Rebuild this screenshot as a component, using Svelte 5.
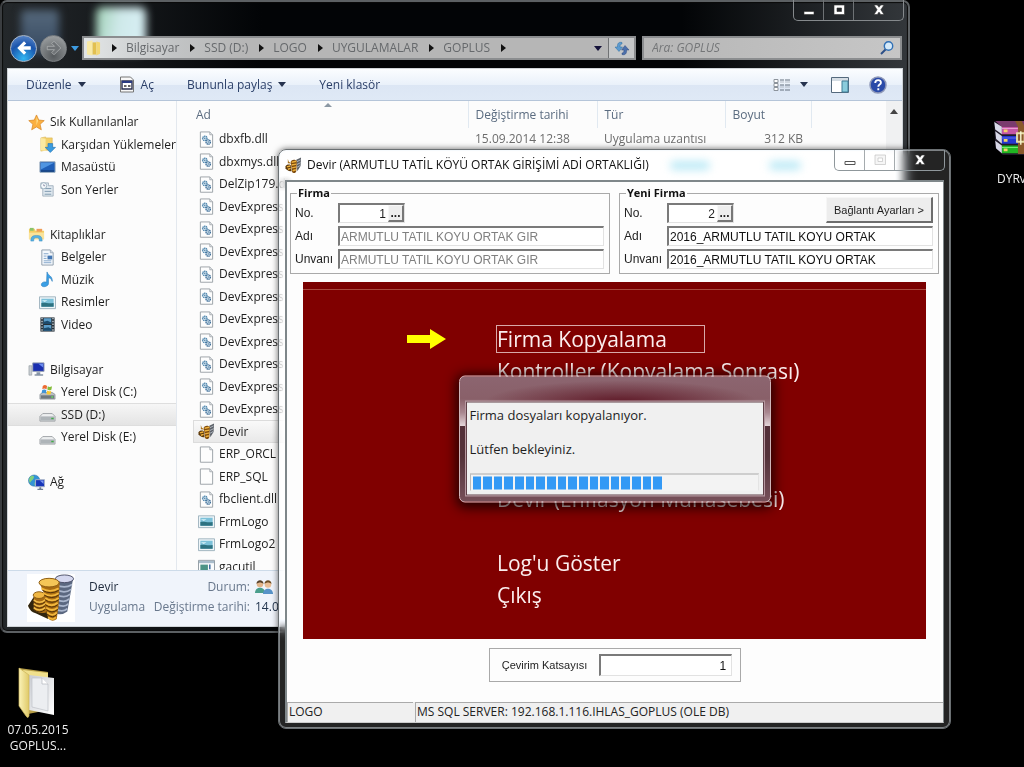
<script>
  const crumbs = ['Bilgisayar', 'SSD (D:)', 'LOGO', 'UYGULAMALAR', 'GOPLUS'];

  const places = [
    { icon: 'star', text: 'Sık Kullanılanlar', root: true },
    { icon: 'downloads', text: 'Karşıdan Yüklemeler' },
    { icon: 'desktop', text: 'Masaüstü' },
    { icon: 'recent', text: 'Son Yerler' },
    null,
    { icon: 'library', text: 'Kitaplıklar', root: true },
    { icon: 'document', text: 'Belgeler' },
    { icon: 'music', text: 'Müzik' },
    { icon: 'picture', text: 'Resimler' },
    { icon: 'video', text: 'Video' },
    null,
    { icon: 'computer', text: 'Bilgisayar', root: true },
    { icon: 'system', text: 'Yerel Disk (C:)' },
    { icon: 'disk', text: 'SSD (D:)', selected: true },
    { icon: 'disk', text: 'Yerel Disk (E:)' },
    null,
    { icon: 'network', text: 'Ağ', root: true }
  ];

  const files = [
    { icon: 'dll', name: 'dbxfb.dll', date: '15.09.2014 12:38', type: 'Uygulama uzantısı', size: '312 KB' },
    { icon: 'dll', name: 'dbxmys.dll' },
    { icon: 'dll', name: 'DelZip179.dll' },
    ...Array.from({ length: 10 }, () => ({ icon: 'dll', name: 'DevExpress' })),
    { icon: 'coins', name: 'Devir', selected: true },
    { icon: 'blank', name: 'ERP_ORCL' },
    { icon: 'blank', name: 'ERP_SQL' },
    { icon: 'dll', name: 'fbclient.dll' },
    { icon: 'picture', name: 'FrmLogo' },
    { icon: 'picture', name: 'FrmLogo2' },
    { icon: 'app', name: 'gacutil' }
  ];

  const groups = [
    { id: 'old', title: 'Firma', no: '1', name: 'ARMUTLU TATIL KOYU ORTAK GIR', locked: true },
    { id: 'new', title: 'Yeni Firma', no: '2', name: '2016_ARMUTLU TATIL KOYU ORTAK', connect: true }
  ];

  const steps = [
    'Firma Kopyalama',
    'Kontroller (Kopyalama Sonrası)',
    '', '', '',
    'Devir (Enflasyon Muhasebesi)',
    '',
    "Log'u Göster",
    'Çıkış'
  ];

  const blocks = Array.from({ length: 18 });
</script>

{#snippet icon(kind)}
  <svg class="icon" viewBox="0 0 18 18" aria-hidden="true">
    {#if kind === 'star'}
      <path d="M9 1l2.4 5.4 5.8.6-4.4 3.9 1.3 5.8L9 13.7l-5.1 3 1.3-5.8L.8 7l5.8-.6z" fill="#fbb040" stroke="#d98a2b" stroke-width=".8" />
      <path d="M9 3l1.6 4.2L9 12z" fill="#ffe08a" />
    {:else if kind === 'downloads'}
      <path d="M2 2l5-1v1h7v13H7l-5 1z" fill="#f3d06b" stroke="#d9b24a" stroke-width=".6" />
      <path d="M2 2l5 1v13l-5-1z" fill="#fbe9a2" />
      <path d="M9.500 8h5v4h3l-5.500 5.500L6.500 12h3z" fill="#3a9be0" stroke="#1e6fb2" stroke-width=".6" />
    {:else if kind === 'desktop'}
      <path d="M1 3h16v11H1z" fill="#1f5fb8" stroke="#8aa0b5" />
      <path d="M2 4h14L2 11z" fill="#4f95e2" />
      <path d="M2 12h14v1.500H2z" fill="#163f78" />
    {:else if kind === 'recent'}
      <path d="M2 2h8v3h5v11H4v-8H2z" fill="#dfe8ef" stroke="#93a5b3" stroke-width=".8" />
      <path d="M6 8h7M6 11h7M6 14h7" stroke="#7d98ad" />
      <circle cx="5" cy="5" r="3.200" fill="#f6fafc" stroke="#90a7b7" stroke-width=".8" />
      <path d="M5 3.500V5h1.500" stroke="#668" fill="none" stroke-width=".7" />
    {:else if kind === 'library'}
      <path d="M1 3h6l1 2h9v9H1z" fill="#f3cf63" />
      <path d="M2 2h4v3H2z" fill="#8bc36a" /><path d="M9 3h6v3H9z" fill="#ef9d57" />
      <path d="M1 7h16v7H1z" fill="#fae39a" />
      <path d="M3 16c0-5 2-6 6-6s6 1 6 6h-3c0-3-1-3.500-3-3.500S6 13 6 16z" fill="#54b0e2" stroke="#3389bd" stroke-width=".5" />
    {:else if kind === 'document'}
      <path d="M3 1h9l3 3v13H3z" fill="#f4f8fc" stroke="#8d9cab" />
      <path d="M12 1v3h3" fill="#cfd9e3" stroke="#8d9cab" stroke-width=".7" />
      <path d="M5 5h5M5 7.500h3M5 10h3M5 12.500h8M5 14.500h8" stroke="#84a6ca" />
      <path d="M9 7h5v4H9z" fill="#4376b3" />
    {:else if kind === 'music'}
      <path d="M8.500 1c1 4 6 4 5.500 10-1-3-2.500-3.500-4-4v6.500c0 3-7 4.500-7.500 1.300C2.200 12 6 10.800 8 12z" fill="#3ba0e6" stroke="#1f76ba" stroke-width=".6" />
    {:else if kind === 'picture'}
      <path d="M.5 3h17v12.500H.5z" fill="#eef5f8" stroke="#9db1bd" />
      <path d="M2.500 5h13v8.500h-13z" fill="#7cc1d9" />
      <path d="M2.500 9.500c4-1 7 1 13 0v4h-13z" fill="#2d7281" />
      <path d="M3 6.500h6l-3 2z" fill="#d6f0f8" />
    {:else if kind === 'video'}
      <path d="M1.500 1.500h15v15h-15z" fill="#26313a" />
      <path d="M5 2.500h8v6H5zM5 9.500h8v6H5z" fill="#5b9dc9" />
      <path d="M5 6l4-1 4 2v1.500H5zM5 13l5-1 3 1.500v2H5z" fill="#1c4b6d" />
      <path d="M3.200 2v14M14.800 2v14" stroke="#cdd6dc" stroke-width="1.400" stroke-dasharray="1.500 1.500" />
    {:else if kind === 'computer'}
      <path d="M1 5h3v10H1z" fill="#c8cdd2" stroke="#8b9198" stroke-width=".6" />
      <path d="M5 2h12v9H5z" fill="#1a2fb0" stroke="#9aa4b5" />
      <path d="M11 3h5v4z" fill="#6b8cf0" />
      <path d="M9 12h4v2h3v1.500H7V14h2z" fill="#8794a5" />
    {:else if kind === 'system'}
      <path d="M1 11l3-2h10l3 2v5H1z" fill="#b9bec2" stroke="#7d858a" stroke-width=".7" />
      <path d="M2 12h14v3.500H2z" fill="#6f787e" /><path d="M13 13h2v1.500h-2z" fill="#67e05e" />
      <path d="M4 2c2-1.500 3-1 4.500 0L8 5.500c-2-1-3-1-4.500 0z" fill="#ec6a32" />
      <path d="M9.300 2.500c1.700 1 3 .6 4.500-.2l-.7 3.700c-1.600.8-2.800.8-4.300-.1z" fill="#85bd3b" />
      <path d="M3.300 6.500c1.600-1 3-1 4.500 0L7.200 10c-1.600-.9-2.900-.9-4.500 0z" fill="#3f94d8" />
      <path d="M8.600 7c1.600.9 2.900.9 4.400.1l-.6 3.600c-1.500.8-2.900.7-4.400-.2z" fill="#f8c934" />
    {:else if kind === 'disk'}
      <path d="M1 11l3-3h10l3 3v5H1z" fill="#eceeef" stroke="#8b9195" stroke-width=".8" />
      <path d="M1.500 11h15v4.500h-15z" fill="#aeb4b8" /><path d="M13 12.500h2.500V14H13z" fill="#3fae45" />
    {:else if kind === 'network'}
      <circle cx="6.500" cy="7" r="6" fill="#3393d6" stroke="#23699c" stroke-width=".5" />
      <path d="M3 2.500c3-1.500 4 0 3 2s-2 2-4 5C.5 7 1 4 3 2.500zM7 9c2 0 2 2 0 3.500z" fill="#7fd07c" />
      <path d="M8 6h9.500v7.500H8z" fill="#1836b8" stroke="#aab6c8" />
      <path d="M12.500 7h4v3.500z" fill="#7e9af1" /><path d="M12 14h2v1.500h2V17h-6v-1.500h2z" fill="#708096" />
    {:else if kind === 'dll' || kind === 'blank'}
      <path d="M2.500 1h10l3 3v13.200h-13z" fill="#fdfdfd" stroke="#9aa0a6" />
      <path d="M12.500 1v3h3" fill="#e4e8eb" stroke="#9aa0a6" stroke-width=".8" />
      {#if kind === 'dll'}
        <circle cx="7.200" cy="7.800" r="2.300" fill="#dcebf5" stroke="#4f86ad" stroke-width="1.500" stroke-dasharray="1.300 .5" />
        <circle cx="10.800" cy="11.700" r="2.300" fill="#dcebf5" stroke="#3f6f99" stroke-width="1.500" stroke-dasharray="1.300 .5" />
        <circle cx="7.200" cy="7.800" r=".8" fill="#44759c" /><circle cx="10.800" cy="11.700" r=".8" fill="#44759c" />
      {/if}
    {:else if kind === 'app'}
      <path d="M.5 2.500h17v14H.5z" fill="#fafcfd" stroke="#8d979f" />
      <path d="M1 3h16v2.500H1z" fill="#a9bccb" /><path d="M2.500 7h8v8h-8z" fill="#4c9386" /><path d="M12.500 7v5" stroke="#35629b" stroke-width="1.500" />
    {:else if kind === 'coins'}
      <path d="M12 3l5-2.500-.5 9L13 15z" fill="#5c6168" />
      <path d="M12.500 5l4-2M12.500 8l4-2M12.500 11l3.500-2" stroke="#b4bac4" />
      <path d="M6 5c1-2.500 5-3 6.500-.5L12 15c-1 2.500-3.500 2.500-4.500 1z" fill="#7d4a0d" />
      <path d="M.5 10c1-2 3.500-2.500 5.500-1.500l1 6.500C4 15.500 2 14 .5 12z" fill="#5d390b" />
      <path d="M7 5.500l5-1M7 8.500l5-1M7.500 11.500l4.500-1M8 14.500l3.500-1M2 10.500l3.500-1M3 13l3-1" stroke="#eeb13c" stroke-width="1.500" />
      <path d="M3 2l1 3 3 2-4-.5z" fill="#a8701b" />
    {/if}
  </svg>
{/snippet}

{#snippet captions()}
  <div class="captions">
    <button aria-label="Simge durumuna küçült"><svg viewBox="0 0 16 14"><path class="glyph" d="M3 8.500h10v3H3z" /></svg></button>
    <button aria-label="Ekranı kapla"><svg viewBox="0 0 16 14"><path class="glyph" fill-rule="evenodd" d="M3 2h10.500v9.500H3zM6 5v3.500h4.500V5z" /></svg></button>
    <button class="close" aria-label="Kapat"><svg viewBox="0 0 16 14"><path class="glyph" d="M3 2h3.300L8 4.300 9.700 2H13L9.900 6.700 13 11.500H9.700L8 9.100l-1.700 2.400H3l3.100-4.800z" /></svg></button>
  </div>
{/snippet}

<main class="screen">
  <div class="shortcut folder">
    <svg viewBox="0 0 54 54" aria-hidden="true">
      <defs>
        <linearGradient id="fold" x1="0" x2="1"><stop offset="0" stop-color="#fbf3b8" /><stop offset="1" stop-color="#dfc968" /></linearGradient>
        <linearGradient id="sheet" x1="0" x2="1" y2="1"><stop offset="0" stop-color="#c9ccd2" /><stop offset="1" stop-color="#fff" /></linearGradient>
      </defs>
      <path d="M8 2l29 4v38l-20 4z" fill="#b79f48" />
      <path d="M12 4l25 3v35l-19-3z" fill="#f0e08c" />
      <path d="M18 9l25 3v37l-25-5z" fill="url(#sheet)" />
      <path d="M21 12h10l6 6v27l-16-4z" fill="#eceef1" stroke="#bfc2c7" stroke-width=".7" />
      <path d="M31 12v6h6" fill="#fff" stroke="#b3b6bb" stroke-width=".7" />
      <path d="M8 2l10 7v41q-1 3-3 0L8 40z" fill="url(#fold)" stroke="#cdb65a" stroke-width=".7" />
    </svg>
    <span>07.05.2015 GOPLUS...</span>
  </div>

  <div class="shortcut archive">
    <svg viewBox="0 0 48 38" aria-hidden="true">
      <path d="M0 1l8 5h40v31H9L1 29z" fill="#201a28" />
      <path d="M1 1h40l7 6H8z" fill="#7a3b6e" />
      <path d="M8 7h40v8H8z" fill="#c557a5" /><path d="M8 17h40v8H8z" fill="#2436cf" /><path d="M8 27h40v8H8z" fill="#20b522" />
      <path d="M0 2l8 5v8L1 10zM1 12l7 5v8l-6-5zM1 22l7 5v8l-6-5z" fill="#d8d9e8" />
      <path d="M8 9h40" stroke="#eba3d6" /><path d="M8 19h40" stroke="#6878f0" /><path d="M8 29h40" stroke="#7df07a" />
      <path d="M10 10h4v3h-4zM10 20h4v3h-4zM10 30h4v3h-4z" fill="#f3d269" />
      <path d="M22 1h7l3 6v29h-7V7z" fill="#8a5a2c" /><path d="M24 14h8v9h-8z" fill="none" stroke="#e7dfa6" stroke-width="2" /><path d="M28 12v14" stroke="#f6f3d0" stroke-width="1.500" />
    </svg>
    <span>DYRv</span>
  </div>

  <section class="explorer" aria-label="GOPLUS">
    <i class="haze bin"></i>
    <i class="haze sheet"></i>
    {@render captions()}

    <header class="address">
      <button class="nav back" aria-label="Geri"><svg viewBox="0 0 16 16"><path d="M2 8l6-6 2 2-2.500 2.500H14v3H7.500L10 12l-2 2z" fill="#fff" /></svg></button>
      <button class="nav next" aria-label="İleri"><svg viewBox="0 0 16 16"><path d="M14 8L8 2 6 4l2.500 2.500H2v3h6.500L6 12l2 2z" fill="#6f7376" stroke="#b9bcbe" stroke-width=".6" /></svg></button>
      <button class="drop" aria-label="Son sayfalar"><svg viewBox="0 0 8 5"><path d="M0 0h8L4 5z" fill="#3d9be0" /></svg></button>
      <nav class="path" aria-label="Konum">
        <svg class="mini" viewBox="0 0 16 18" aria-hidden="true"><path d="M1 2l6-1v16l-6-1z" fill="#f9eaa5" /><path d="M7 3h4v13H7z" fill="#e2c04f" /><path d="M11 2l4 1v12l-4 2z" fill="#f3d772" /></svg>
        {#each crumbs as c}
          <svg class="chev" viewBox="0 0 5 8" aria-hidden="true"><path d="M0 0l5 4-5 4z" fill="#111" /></svg>
          <button class="crumb">{c}</button>
        {/each}
        <svg class="chev" viewBox="0 0 5 8" aria-hidden="true"><path d="M0 0l5 4-5 4z" fill="#111" /></svg>
        <button class="history" aria-label="Önceki konumlar"><svg viewBox="0 0 8 5"><path d="M0 0h8L4 5z" fill="#15123a" /></svg></button>
        <button class="refresh" aria-label="Yenile"><svg viewBox="0 0 18 16"><path d="M9 2.500c-3-1-5 1-4.500 4.500H2l4 4.500L9.500 7H7c0-2 .5-3 2-3z" fill="#5b9bd0" stroke="#2f6c9f" stroke-width=".5" /><path d="M9 14.500c3 1 5-1 4.500-4.500H16l-4-4.500L8.500 10H11c0 2-.5 3-2 3z" fill="#4c70ab" stroke="#2c4a80" stroke-width=".5" /></svg></button>
      </nav>
      <div class="search">
        <input type="search" aria-label="Ara" placeholder="Ara: GOPLUS" />
        <svg viewBox="0 0 16 16" aria-hidden="true"><circle cx="9.500" cy="6" r="4.200" fill="#d5e9f8" stroke="#2f6fb5" stroke-width="1.400" /><path d="M6.500 9.500L2 14" stroke="#2b4f87" stroke-width="2" /></svg>
      </div>
    </header>

    <div class="body">
      <div class="toolbar">
        <button>Düzenle <svg class="tri" viewBox="0 0 8 5"><path d="M0 0h8L4 5z" /></svg></button>
        <button>
          <svg class="open" viewBox="0 0 16 17"><path d="M1.500 1h10l3 3v12h-13z" fill="#f8f8f8" stroke="#777" /><path d="M3 5h10v8H3z" fill="#fff" stroke="#2a2f4d" stroke-width="1.400" /><path d="M3 5h10v2H3z" fill="#2a3b82" /><path d="M5 10h2.500M9 10h2.500" stroke="#333" stroke-width="1.500" /></svg>
          Aç
        </button>
        <button>Bununla paylaş <svg class="tri" viewBox="0 0 8 5"><path d="M0 0h8L4 5z" /></svg></button>
        <button class="fresh">Yeni klasör</button>
        <button class="views" aria-label="Görünüm"><svg viewBox="0 0 18 14"><path d="M1 1.500h4v3H1zM1 5.500h4v3H1zM1 9.500h4v3H1z" fill="#fff" stroke="#8d949c" /><path d="M7 2h4M12 2h5M7 7h4M12 7h5M7 12h4M12 12h5" stroke="#65717e" /><path d="M7 4h4M12 4h5M7 9h4M12 9h5" stroke="#b5bdc6" /></svg></button>
        <button class="menu" aria-label="Diğer seçenekler"><svg class="tri" viewBox="0 0 8 5"><path d="M0 0h8L4 5z" /></svg></button>
        <button class="pane" aria-label="Önizleme bölmesi"><svg viewBox="0 0 18 16"><path d="M.5.500h17v15H.5z" fill="#fff" stroke="#54697c" /><path d="M1 1h16v3H1z" fill="#d5dde4" /><path d="M11 4h6v11h-6z" fill="#8accdc" stroke="#417c96" /></svg></button>
        <button class="help" aria-label="Yardım"><svg viewBox="0 0 18 18"><circle cx="9" cy="9" r="8" fill="#2b4ba8" stroke="#8e98b8" stroke-width="1.500" /><path d="M6.200 7c.1-4 6-3.700 5.700-.2-.2 1.900-2.700 1.800-2.600 3.900M9.300 12.300v1.900" fill="none" stroke="#fff" stroke-width="1.900" /></svg></button>
      </div>

      <div class="content">
        <ul class="tree">
          {#each places as p}
            <li class:root={p?.root} class:selected={p?.selected}>
              {#if p}{@render icon(p.icon)}<span>{p.text}</span>{/if}
            </li>
          {/each}
        </ul>
        <div class="files">
          <svg class="sort" viewBox="0 0 8 4" aria-hidden="true"><path d="M0 4l4-4 4 4z" fill="#8b98a3" /></svg>
          <table>
            <thead>
              <tr><th class="c-name">Ad</th><th class="c-date">Değiştirme tarihi</th><th class="c-type">Tür</th><th class="c-size">Boyut</th><th class="c-rest" aria-label="Boş"></th></tr>
            </thead>
            <tbody>
              {#each files as f}
                <tr class:selected={f.selected}>
                  <td><div class="file">{@render icon(f.icon)}<span>{f.name}</span></div></td>
                  <td>{f.date ?? ''}</td>
                  <td>{f.type ?? ''}</td>
                  <td class="num">{f.size ?? ''}</td>
                  <td></td>
                </tr>
              {/each}
            </tbody>
          </table>
        </div>
        <div class="scroll"><svg viewBox="0 0 8 5" aria-hidden="true"><path d="M0 5l4-5 4 5z" fill="#444" /></svg></div>
      </div>

      <footer class="details">
        <svg class="big" viewBox="0 0 50 50" aria-hidden="true">
          <path d="M0 0h50v50H0z" fill="#fff" />
          <path d="M29 6l-2 33q7 6 15 0l6-34z" fill="#5b6880" />
          <g fill="none" stroke="#aab6cc" stroke-width="1.800"><path d="M30 11q9 5 17 0M30 16q9 5 16 0M30 21q9 5 15 0M30 26q9 5 14 0M30 31q9 5 13 0M29 36q8 5 13 0" /></g>
          <ellipse cx="39" cy="5" rx="9.500" ry="4" fill="#d5d8ef" stroke="#4c5068" />
          <path d="M1 33q2 6 8 8l13 6V25L7 24z" fill="#31250e" />
          <path d="M7 23v14q5 5 13 3V23z" fill="#a76b14" />
          <path d="M7 27q6 5 12 0M7 31q6 5 12 0M7 35q6 5 12 0" fill="none" stroke="#f3bf4b" stroke-width="1.500" />
          <path d="M7 29q6 5 12 0M7 33q6 5 12 0M7 37q6 5 12 0" fill="none" stroke="#4f3007" />
          <ellipse cx="12.500" cy="22" rx="6" ry="3.500" fill="#f0b744" stroke="#8b5b12" />
          <path d="M13 9l6 14v12l3 11q4 5 9 1l2-15 1-23z" fill="#a96c12" />
          <path d="M15 15q9 5 18 0M17 20q8 5 16 0M19 25q7 5 14 0M19 30q7 5 13 0M20 35q6 5 12 0M21 40q6 5 10 0M22 45q5 4 8 0" fill="none" stroke="#f2b73c" stroke-width="1.900" />
          <path d="M16 17q9 5 17 0M18 22q8 5 15 0M19 27q7 5 14 0M19 32q7 5 13 0M20 37q6 5 12 0M21 42q6 5 10 0" fill="none" stroke="#4f3007" />
          <ellipse cx="23" cy="9" rx="10.500" ry="4.500" fill="#f5c657" stroke="#8c5a10" />
        </svg>
        <div class="meta">
          <div class="line"><b>Devir</b><span class="state">Durum:</span>
            <svg class="people" viewBox="0 0 18 16" aria-hidden="true"><circle cx="5" cy="5" r="3.300" fill="#e2b48a" /><path d="M1.500 5c0-5 7-5 7 0-2-2-5-2-7 0z" fill="#54402a" /><path d="M0 14c0-7 10-7 10 0z" fill="#4a9e8c" /><circle cx="13" cy="5.500" r="3.300" fill="#e9bd94" /><path d="M9.500 5c0-5 7-5 7 0-2-2-5-2-7 0z" fill="#6c4b22" /><path d="M8 15c0-7 10-7 10 0z" fill="#5793c8" /></svg>
          </div>
          <div class="line"><span>Uygulama</span><span class="state">Değiştirme tarihi:</span><em>14.0</em></div>
        </div>
      </footer>
    </div>
  </section>

  <section class="devir" aria-label="Devir">
    {@render captions()}
    <h1>
      {@render icon('coins')}<span>Devir (ARMUTLU TATİL KÖYÜ ORTAK GİRİŞİMİ ADİ ORTAKLIĞI)</span>
      <i class="glow"></i><i class="glow far"></i>
    </h1>
    <div class="client">
      <div class="groups">
        {#each groups as g}
          <fieldset>
            <legend>{g.title}</legend>
            <label for="{g.id}-no">No.</label>
            <div class="norow">
              <div class="picker">
                <input id="{g.id}-no" value={g.no} />
                <button aria-label="Firma seç">...</button>
              </div>
              {#if g.connect}<button class="connect">Bağlantı Ayarları &gt;</button>{/if}
            </div>
            <label for="{g.id}-name">Adı</label>
            <input class="sunk" id="{g.id}-name" value={g.name} disabled={g.locked} />
            <label for="{g.id}-title">Unvanı</label>
            <input class="sunk" id="{g.id}-title" value={g.name} disabled={g.locked} />
          </fieldset>
        {/each}
      </div>

      <div class="panel">
        <svg class="arrow" viewBox="0 0 39 20" aria-hidden="true"><path d="M0 6h23V0l16 10-16 10v-6H0z" fill="#ff0" /></svg>
        <ul class="steps">
          {#each steps as s, i}
            <li>{#if s}<button class:focus={i === 0}>{s}</button>{/if}</li>
          {/each}
        </ul>
      </div>

      <div class="factor">
        <label for="factor">Çevirim Katsayısı</label>
        <input class="sunk" id="factor" value="1" />
      </div>

      <footer class="status"><span class="brand">LOGO</span><span class="server">MS SQL SERVER: 192.168.1.116.IHLAS_GOPLUS (OLE DB)</span></footer>
    </div>

    <div class="dialog" role="dialog" aria-label="Firma Kopyalama">
      <div class="message">
        <p>Firma dosyaları kopyalanıyor.</p>
        <p>Lütfen bekleyiniz.</p>
        <div class="track" role="progressbar" aria-label="İlerleme" aria-valuenow="67" aria-valuemin="0" aria-valuemax="100">
          <div class="fill" style="width: 67%">{#each blocks as _}<i></i>{/each}</div>
        </div>
      </div>
    </div>
  </section>
</main>

<style>
  :global(body) { margin: 0; background: #000; }
  * { box-sizing: border-box; }
  .screen {
    position: relative; height: 100vh; min-height: 700px; overflow: hidden;
    background: #000; color: #1e1e1e;
    font: 12px/16px "Open Sans", "Noto Sans", sans-serif;
  }
  button, input { font: inherit; color: inherit; margin: 0; padding: 0; border: 0; background: none; border-radius: 0; }
  button { display: flex; align-items: center; justify-content: center; white-space: nowrap; }
  svg { display: block; flex: none; }
  ul { list-style: none; margin: 0; padding: 0; }
  .icon { width: 17px; height: 17px; }

  .shortcut { position: absolute; width: 76px; color: #eee; text-align: center; display: flex; flex-direction: column; align-items: center; }
  .folder { left: 0; top: 666px; }
  .folder svg { width: 54px; height: 54px; margin-bottom: 2px; }
  .archive { left: 993px; top: 120px; width: 48px; align-items: flex-start; }
  .archive svg { width: 48px; height: 36px; margin-bottom: 15px; }
  .archive span { padding-left: 4px; }

  .explorer {
    position: absolute; left: 0; right: 114px; top: 0; bottom: 134px;
    display: flex; flex-direction: column; padding: 34px 5px 4px;
    border: 2px solid #5c6063; border-left-color: #3a3d40; border-radius: 7px;
    background: linear-gradient(90deg, #24282b 0, #15181b 120px, #020406 260px, #020406 680px, #33373b 100%);
    box-shadow: inset 0 0 1px 1px #0a0a0a;
  }
  .haze { position: absolute; filter: blur(4px); }
  .bin { left: 19px; top: 8px; width: 38px; height: 44px; background: linear-gradient(#56697c, #34475f); border-radius: 4px 4px 14px 14px; }
  .sheet { left: 94px; top: 5px; width: 50px; height: 46px; background: linear-gradient(100deg, #9fd0b4, #cfe9ea 45%, #d9f0f6); border-radius: 6px; }

  .captions { position: absolute; top: -2px; right: 4px; display: flex; height: 21px; border: 1px solid #85898c; border-top: 0; border-radius: 0 0 5px 5px; }
  .captions button { width: 30px; border-right: 1px solid #6e7275; }
  .captions .close { width: 49px; border-right: 0; }
  .captions svg { width: 16px; height: 14px; }
  .glyph { fill: #fff; stroke: #333; stroke-width: .6; }

  .address { position: relative; display: flex; align-items: center; height: 24px; margin-bottom: 8px; padding-right: 1px; color: #66696c; }
  .nav { width: 27px; height: 27px; border-radius: 50%; border: 1px solid #a9b7c8; margin-left: 3px; flex: none; }
  .nav svg { width: 18px; height: 18px; }
  .back { background: radial-gradient(circle at 50% 90%, #32b6f2, #1a55ad 55%, #6c94cf); }
  .next { background: radial-gradient(circle at 50% 80%, #55595c, #85898b 60%, #a8abad); border-color: #7d8184; }
  .drop { width: 15px; }
  .drop svg { width: 8px; height: 5px; }
  .path { flex: 1; display: flex; align-items: center; height: 24px; border: 2px solid #8b8d8f; background: linear-gradient(90deg, #e3e6e7 0, #c2c4c5 90px, #b6b6b6 160px, #b6b6b6); padding-left: 2px; }
  .mini { width: 15px; height: 18px; }
  .chev { width: 5px; height: 8px; margin: 0 9px 0 11px; }
  .history { margin-left: auto; width: 20px; }
  .history svg { width: 8px; height: 5px; }
  .refresh { width: 26px; height: 20px; border-left: 1px solid #707274; background: #c5c7c8; }
  .refresh svg { width: 18px; height: 16px; }
  .search { width: 260px; margin-left: 6px; height: 24px; display: flex; align-items: center; border: 2px solid #8b8d8f; background: linear-gradient(90deg, #b6b6b6, #c6c6c6); padding: 0 5px 0 8px; }
  .search input { flex: 1; min-width: 0; font-style: italic; outline: 0; }
  .search input::placeholder { color: #747678; opacity: 1; }
  .search svg { width: 16px; height: 16px; }

  .body { position: relative; flex: 1; min-height: 0; display: flex; flex-direction: column; background: #fcfcfc; border: 1px solid #cfd4d8; }
  .toolbar { display: flex; align-items: center; height: 32px; flex: none; padding: 0 15px 0 18px; color: #2b3f68; background: linear-gradient(#fbfdff, #eaf1fa 50%, #dce6f4 51%, #dfe9f6); border-bottom: 1px solid #b5c5d9; }
  .toolbar button { margin-right: 33px; gap: 6px; }
  .tri { width: 8px; height: 5px; fill: #26334f; }
  .open { width: 16px; height: 17px; }
  .toolbar .fresh { margin-right: auto; }
  .toolbar .views { margin-right: 9px; }
  .views svg { width: 18px; height: 14px; }
  .toolbar .menu { margin-right: 23px; }
  .toolbar .pane { margin-right: 20px; }
  .pane svg { width: 18px; height: 16px; }
  .toolbar .help { margin-right: 0; }
  .help svg { width: 18px; height: 18px; }

  .content { flex: 1; min-height: 0; display: flex; overflow: hidden; }
  .tree { width: 169px; flex: none; padding-top: 10px; border-right: 1px solid #e3e8ee; overflow: hidden; }
  .tree li { height: 22px; display: flex; align-items: center; gap: 5px; padding-left: 31px; white-space: nowrap; }
  .tree li:nth-child(even) { height: 23px; }
  .tree .root { padding-left: 20px; }
  .tree .selected { background: linear-gradient(#f6f6f6, #e4e4e4); border: 1px solid #dedede; border-left: 0; border-right: 0; }
  .files { position: relative; flex: 1; min-width: 0; overflow: hidden; padding-left: 16px; }
  .sort { position: absolute; left: 147px; top: 2px; width: 8px; height: 4px; }
  table { width: 100%; border-collapse: collapse; table-layout: fixed; color: #6d6d6d; }
  th { height: 27px; font-weight: 400; text-align: left; padding: 0 0 0 7px; color: #5b6c80; border-right: 1px solid #e1e9f1; }
  .c-name { width: 275px; padding-left: 3px; }
  .c-date { width: 129px; }
  .c-type { width: 128px; }
  .c-size { width: 86px; }
  .c-rest { border-right: 0; }
  tbody tr { height: 22px; }
  tbody tr:nth-child(even) { height: 23px; }
  td { padding: 0 0 0 7px; white-space: nowrap; }
  td:first-child { padding-left: 5px; }
  .num { text-align: right; padding-right: 8px; }
  .file { display: flex; align-items: center; gap: 4px; color: #1e1e1e; }
  tbody .selected { background: linear-gradient(#fafafa, #e8e8e8); outline: 1px solid #dcdcdc; outline-offset: -1px; }
  .scroll { width: 16px; flex: none; background: #f0f1f2; display: flex; justify-content: center; padding-top: 8px; }
  .scroll svg { width: 8px; height: 5px; }

  .details { height: 56px; flex: none; display: flex; background: #f0f4fb; border-top: 1px solid #cddbe9; padding: 3px 0 0 19px; color: #69788d; }
  .big { width: 48px; height: 48px; }
  .meta { padding: 3px 0 0 14px; }
  .line { display: flex; align-items: center; height: 20px; }
  .line b { font-weight: 400; color: #1e2a3c; width: 64px; }
  .line span:first-child { width: 64px; }
  .state { width: 97px; text-align: right; white-space: nowrap; }
  .people { width: 18px; height: 16px; margin-left: 5px; }
  .line em { font-style: normal; color: #24364f; padding-left: 5px; }

  .devir {
    position: absolute; left: 278px; right: 73px; top: 149px; bottom: 38px;
    display: flex; flex-direction: column; padding: 0 6px 5px;
    border: 1px solid #6b7073; border-radius: 8px;
    background: rgba(255, 255, 255, .14); backdrop-filter: blur(4px) brightness(1.08);
    box-shadow: 0 0 6px 0 rgba(0, 0, 0, .6), inset 0 0 0 1px rgba(235, 245, 250, .45);
  }
  .devir .captions { top: 0; right: 5px; border-color: #8f979b; }
  .devir .captions button { border-color: #a5abae; }
  .devir .captions svg { overflow: visible; }
  .devir .captions button:first-child .glyph { stroke: #555; stroke-width: 1; }
  .devir .captions button:nth-child(2) .glyph { fill: #f6f6f6; stroke: #bbb; }
  h1 { display: flex; align-items: center; gap: 5px; height: 30px; margin: 0; font: inherit; color: #111; white-space: nowrap; flex: none; }
  .glow { width: 40px; height: 9px; margin-left: 16px; border-radius: 5px; background: #bdeaf6; filter: blur(4px); }
  .far { margin-left: 54px; width: 32px; }
  .client { flex: 1; min-height: 0; display: flex; flex-direction: column; background: #fdfdfd; border: 2px solid #7f878a; border-right-width: 1px; border-bottom: 1px solid #ccc; }
  .client { font-family: "Liberation Sans", Arial, sans-serif; }
  .groups { display: flex; gap: 9px; padding: 4px 4px 0 3px; }
  fieldset { flex: 1; min-width: 0; margin: 0; padding: 3px 5px 4px 4px; border: 1px solid #a9a9a9; display: grid; grid-template-columns: 43px 1fr; grid-auto-rows: 20px; row-gap: 3px; align-items: center; }
  legend { font: bold 11px/14px "Open Sans", "Noto Sans", sans-serif; padding: 0 1px; margin-left: 2px; color: #111; }
  label { white-space: nowrap; }
  .sunk, .picker { width: 100%; height: 20px; background: #fff; border: 2px solid #7a7a7a; border-right: 1px solid #e2e2e2; border-bottom: 1px solid #e2e2e2; outline: 0; }
  .sunk { padding-left: 1px; color: #111; }
  .sunk:disabled { color: #808080; }
  .norow { display: flex; align-items: flex-end; justify-content: space-between; height: 20px; }
  .picker { display: flex; width: 67px; }
  .picker input { flex: 1; min-width: 0; text-align: right; padding-right: 2px; outline: 0; }
  .picker button { width: 16px; background: #eee; border: 1px solid #f8f8f8; border-right: 2px solid #777; border-bottom: 2px solid #777; font-weight: 700; line-height: 10px; }
  .connect { height: 26px; width: 107px; background: #ededed; border: 1px solid #f6f6f6; border-right: 2px solid #6d6d6d; border-bottom: 2px solid #6d6d6d; font-size: 11px; }

  .panel { flex: 1; min-height: 0; margin: 8px 17px 0 16px; padding: 36px 20px 0 104px; background: #800000; display: flex; gap: 50px; border-top: 7px solid #7a0000; box-shadow: inset 0 1px #a8483f; overflow: hidden; }
  .arrow { width: 39px; height: 20px; margin-top: 4px; }
  .steps { font: 21px/28px "Open Sans", "Noto Sans", sans-serif; color: #fbeeee; }
  .steps li { height: 32px; }
  .steps button { height: 28px; border: 1px solid transparent; }
  .steps .focus { width: 209px; border: 1px solid #d8a8a8; justify-content: flex-start; }

  .factor { align-self: center; display: flex; align-items: center; gap: 12px; margin: 9px 0 20px; padding: 0 8px 0 12px; height: 34px; border: 1px solid #a9a9a9; }
  .factor .sunk { width: 133px; height: 22px; text-align: right; padding-right: 5px; }
  .factor label { font-size: 11px; }

  .status { display: flex; gap: 2px; height: 20px; flex: none; background: #f0f0f0; font: 12px/18px "Open Sans", "Noto Sans", sans-serif; color: #222; }
  .status span { border-top: 1px solid #aaa; border-left: 1px solid #aaa; white-space: nowrap; padding-left: 1px; }
  .brand { width: 126px; }
  .server { flex: 1; }

  .dialog {
    position: absolute; left: 50%; top: 50%; transform: translate(-50%, -50%);
    width: 312px; padding: 25px 6px 6px; border: 1px solid #cfb5ba; border-radius: 6px;
    background:
      radial-gradient(ellipse at 52% 100%, rgba(80, 0, 16, .75), transparent 60%) center top / 100% 26px no-repeat,
      linear-gradient(#8c6570, #896069 22px, #a98790 36px, #e2d3d7 49px, #532f38 50px, #54323a 80px, #765059 100%);
    box-shadow: 0 2px 12px 3px rgba(20, 0, 0, .85);
  }
  .message { display: flex; flex-direction: column; border: 1px solid #604048; outline: 1px solid #b698a0; background: #f0f0f0; padding: 4px 4px 4px 3px; font: 13px/16px "Open Sans", "Noto Sans", sans-serif; }
  p { margin: 0 0 18px; }
  .track { height: 17px; padding: 2px; margin-top: -1px; border-top: 1px solid #a9a9a9; border-left: 1px solid #bbb; border-right: 1px solid #e4e4e4; background: #f3f3f3; }
  .fill { display: flex; gap: 2px; height: 13px; }
  .fill i { flex: 1; background: #3399f5; }
</style>
